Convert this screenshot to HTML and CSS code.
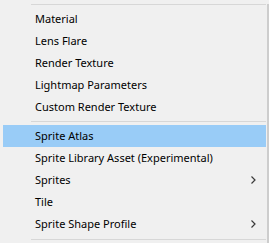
FILE: index.html
```html
<!DOCTYPE html>
<html lang="en">
<head>
  <meta charset="UTF-8">
  <title>Create menu</title>
  <link rel="stylesheet" href="styles.css">
</head>
<body>
  <div class="menu">
    <div class="sep first"></div>
    <div class="item">Material</div>
    <div class="item">Lens Flare</div>
    <div class="item">Render Texture</div>
    <div class="item">Lightmap Parameters</div>
    <div class="item">Custom Render Texture</div>
    <div class="sep"></div>
    <div class="item active">Sprite Atlas</div>
    <div class="item">Sprite Library Asset (Experimental)</div>
    <div class="item">Sprites
      <svg class="arrow" width="5" height="8" viewBox="0 0 5 8"><polyline points="0.5,0.5 4,4 0.5,7.5" fill="none" stroke="#3a3a3a" stroke-width="1.2"/></svg>
    </div>
    <div class="item">Tile</div>
    <div class="item">Sprite Shape Profile
      <svg class="arrow" width="5" height="8" viewBox="0 0 5 8"><polyline points="0.5,0.5 4,4 0.5,7.5" fill="none" stroke="#3a3a3a" stroke-width="1.2"/></svg>
    </div>
    <div class="sep last"></div>
  </div>
</body>
</html>
```

FILE: styles.css
```css
* {
  margin: 0;
  padding: 0;
  box-sizing: border-box;
}

body {
  background-color: #f0f0f0;
  width: 269px;
  height: 243px;
  overflow: hidden;
}

.menu {
  width: 269px;
  height: 243px;
  background-color: #f0f0f0;
  border-right: 2px solid #cdcdcd;
  font-family: "Noto Sans", "Liberation Sans", sans-serif;
  font-size: 11px;
  color: #000;
}

.sep {
  height: 1px;
  background-color: #d7d7d7;
  margin: 3px 1px 3px 31px;
}

.sep.first {
  margin-top: 4px;
}

.sep.last {
  margin-top: 4px;
}

.item {
  display: flex;
  align-items: center;
  justify-content: space-between;
  height: 22px;
  margin: 0 1px 0 3px;
  padding: 0 10px 1px 32px;
  white-space: nowrap;
}

.item.active {
  background-color: #99ccf7;
}

.arrow {
  display: block;
}
```
